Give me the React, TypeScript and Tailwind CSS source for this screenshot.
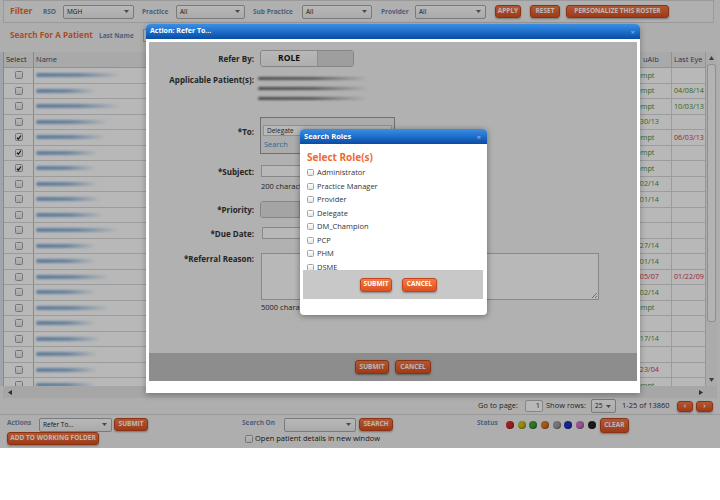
import React from "react";

type Row = {
  w: number;
  checked?: boolean;
  ualb?: string;
  ualbRed?: boolean;
  eye?: string;
  eyeRed?: boolean;
};

const rows: Row[] = [
  { w: 85, ualb: "Exempt" },
  { w: 60, ualb: "Exempt", eye: "04/08/14" },
  { w: 85, ualb: "Exempt", eye: "10/03/13" },
  { w: 73, ualb: "10/30/13" },
  { w: 70, checked: true, ualb: "Exempt", eye: "06/03/13", eyeRed: true },
  { w: 62, checked: true, ualb: "Exempt" },
  { w: 60, checked: true, ualb: "Exempt" },
  { w: 62, ualb: "01/02/14" },
  { w: 65, ualb: "02/01/14" },
  { w: 68 },
  { w: 83 },
  { w: 60, ualb: "02/27/14" },
  { w: 60, ualb: "03/01/14" },
  { w: 73, ualb: "03/05/07", ualbRed: true, eye: "01/22/09", eyeRed: true },
  { w: 60, ualb: "04/02/14" },
  { w: 73, ualb: "Exempt" },
  { w: 60 },
  { w: 65, ualb: "11/17/14" },
  { w: 62 },
  { w: 62, ualb: "11/23/04", ualbRed: true },
  { w: 60, ualb: "Exempt" },
];

const roles = ["Administrator", "Practice Manager", "Provider", "Delegate", "DM_Champion", "PCP", "PHM", "DSME"];

const statusColors = ["#d92b2b", "#c9c21f", "#3ea23a", "#e07b22", "#a3a3a3", "#2430c9", "#d274c9", "#262626"];

function Btn({ children, className = "" }: { children?: React.ReactNode; className?: string }) {
  return (
    <div
      className={`flex shrink-0 items-center justify-center rounded-[3px] border border-[#c2461c] bg-linear-to-b from-[#f57b46] to-[#dc5020] text-[6.5px] font-bold uppercase leading-none text-white shadow-[0_1px_2px_rgba(0,0,0,0.35)] ${className}`}
    >
      {children}
    </div>
  );
}

function Sel({ value, className = "" }: { value: string; className?: string }) {
  return (
    <div
      className={`flex h-[14px] shrink-0 items-center justify-between rounded-[2px] border border-[#a9a9a9] bg-linear-to-b from-white to-[#ececec] pl-[3px] pr-[4px] text-[6.5px] text-[#222] ${className}`}
    >
      <span>{value}</span>
      <svg width="5" height="3" viewBox="0 0 5 3">
        <path d="M0 0h5L2.5 3z" fill="#666" />
      </svg>
    </div>
  );
}

function Check({ checked, size = 8 }: { checked?: boolean; size?: number }) {
  return (
    <div
      className="flex shrink-0 items-center justify-center rounded-[1.5px] border border-[#a3a3a3] bg-linear-to-b from-white to-[#e6e6e6]"
      style={{ width: size, height: size }}
    >
      {checked && (
        <svg width="7" height="7" viewBox="0 0 7 7">
          <path d="M1.2 3.8 2.8 5.4 5.8 1.2" fill="none" stroke="#111" strokeWidth="1.3" />
        </svg>
      )}
    </div>
  );
}

function Label({ children, className = "" }: { children: React.ReactNode; className?: string }) {
  return <span className={`shrink-0 text-[6.5px] font-bold text-[#6a86ad] ${className}`}>{children}</span>;
}

function FormLabel({ children, className = "" }: { children: React.ReactNode; className?: string }) {
  return (
    <div className={`w-[105px] shrink-0 text-right text-[8px] font-bold leading-[11px] text-[#333] ${className}`}>
      {children}
    </div>
  );
}

function BlurLine({ width }: { width: number }) {
  return (
    <div
      className="h-[3px] rounded-full bg-linear-to-r from-[#6a6a6a] via-[#7a7a7a] to-transparent blur-[1px]"
      style={{ width }}
    />
  );
}

function FilterBar() {
  return (
    <div className="ml-[3px] flex h-[23px] w-[711px] items-center border border-[#d6d6d6] bg-[#f4f4f4] pl-[6px]">
      <span className="w-[33px] shrink-0 text-[8.5px] font-bold text-[#ec6a32]">Filter</span>
      <Label className="w-[20px]">RSO</Label>
      <Sel value="MGH" className="w-[71px]" />
      <Label className="ml-[8px] w-[34px]">Practice</Label>
      <Sel value="All" className="w-[69px]" />
      <Label className="ml-[8px] w-[49px]">Sub Practice</Label>
      <Sel value="All" className="w-[70px]" />
      <Label className="ml-[9px] w-[34px]">Provider</Label>
      <Sel value="All" className="w-[71px]" />
      <Btn className="ml-[9px] h-[13px] w-[26px]">Apply</Btn>
      <Btn className="ml-[9px] h-[13px] w-[30px]">Reset</Btn>
      <Btn className="ml-[6px] h-[13px] w-[103px]">Personalize this roster</Btn>
    </div>
  );
}

function Roster() {
  return (
    <>
      <div className="flex h-[334px]">
        <div className="w-[3px] bg-[#dde5ee]" />
        <div className="w-[702px] overflow-hidden border-l border-[#bdbdbd] bg-white text-[7.2px]">
          <div className="flex h-[16px] items-center border-b border-[#c9c9c9] bg-[#eaeaea] text-[7.5px]">
            <div className="flex h-full w-[30px] items-center border-r border-[#bdbdbd] pl-[2px] text-[#333]">Select</div>
            <div className="flex-1 pl-[2px] text-[#36507a]">Name</div>
            <div className="flex h-full w-[50px] items-center pl-[22px] text-[#36507a]">uAlb</div>
            <div className="flex h-full w-[34px] items-center border-l border-[#c9c9c9] pl-[2px] text-[#36507a]">Last Eye</div>
          </div>
          {rows.map((r, i) => (
            <div key={i} className="flex h-[15.5px] items-center border-b border-[#d9d9d9]">
              <div className="flex h-full w-[30px] items-center justify-center border-r border-[#bdbdbd]">
                <Check checked={r.checked} />
              </div>
              <div className="flex-1 pl-[2px]">
                <div
                  className="h-[4px] rounded-full bg-linear-to-r from-[#86aed6] via-[#93b8dc] to-transparent blur-[1.2px]"
                  style={{ width: r.w }}
                />
              </div>
              <div className={`w-[50px] pl-[8px] ${r.ualbRed ? "text-[#d8334a]" : "text-[#4f8f34]"}`}>{r.ualb}</div>
              <div
                className={`flex h-full w-[34px] items-center border-l border-[#d9d9d9] pl-[2px] ${r.eyeRed ? "text-[#d8334a]" : "text-[#4f8f34]"}`}
              >
                {r.eye}
              </div>
            </div>
          ))}
        </div>
        <div className="relative w-[12px] border-l border-[#d0d0d0] bg-[#ededed]">
          <svg className="absolute left-[3px] top-[4px]" width="5" height="4" viewBox="0 0 5 4">
            <path d="M0 4 2.5 0 5 4z" fill="#555" />
          </svg>
          <div className="absolute left-[1px] right-[1px] top-[12px] h-[258px] rounded-[3px] border border-[#c6c6c6] bg-[#f8f8f8]" />
          <svg className="absolute bottom-[4px] left-[3px]" width="5" height="4" viewBox="0 0 5 4">
            <path d="M0 0h5L2.5 4z" fill="#555" />
          </svg>
        </div>
      </div>
      <div className="relative ml-[3px] h-[12px] w-[714px] bg-[#e6e6e6]">
        <svg className="absolute left-[5px] top-[4px]" width="4" height="5" viewBox="0 0 4 5">
          <path d="M4 0v5L0 2.5z" fill="#444" />
        </svg>
        <svg className="absolute left-[696px] top-[4px]" width="4" height="5" viewBox="0 0 4 5">
          <path d="M0 0v5l4-2.5z" fill="#444" />
        </svg>
      </div>
    </>
  );
}

function Pager() {
  return (
    <div className="flex h-[17px] items-center justify-end border-b border-[#d4d4d4] pr-[7px] text-[7.5px] text-[#333]">
      <span className="w-[47px] shrink-0">Go to page:</span>
      <div className="flex h-[12px] w-[18px] items-center justify-end rounded-[2px] border border-[#bbb] bg-white pr-[2px]">1</div>
      <span className="w-[48px] shrink-0 pl-[3px]">Show rows:</span>
      <Sel value="25" className="h-[12px] w-[25px]" />
      <span className="w-[61px] shrink-0 pl-[6px]">1-25 of 13860</span>
      <Btn className="h-[11px] w-[16px] text-[#c84a1c]">‹</Btn>
      <Btn className="ml-[3px] h-[11px] w-[17px] text-[#c84a1c]">›</Btn>
    </div>
  );
}

function ActionsBar() {
  return (
    <div className="flex pt-[3px] text-[7.5px] text-[#222]">
      <div className="w-[242px] shrink-0 pl-[7px]">
        <div className="flex h-[13px] items-center">
          <Label className="w-[32px] self-start">Actions</Label>
          <Sel value="Refer To..." className="h-[13px] w-[73px]" />
          <Btn className="ml-[2px] h-[13px] w-[34px]">Submit</Btn>
        </div>
        <Btn className="mt-[1px] h-[13px] w-[92px]">Add to working folder</Btn>
      </div>
      <div className="w-[235px] shrink-0">
        <div className="flex h-[13px] items-center">
          <Label className="w-[42px] self-start">Search On</Label>
          <Sel value="" className="h-[13px] w-[72px]" />
          <Btn className="ml-[3px] h-[13px] w-[34px]">Search</Btn>
        </div>
        <div className="mt-[2px] flex items-center gap-[2px] pl-[3px]">
          <Check />
          <span>Open patient details in new window</span>
        </div>
      </div>
      <div className="flex h-[14px] items-center">
        <Label className="w-[29px] self-start">Status</Label>
        <div className="flex gap-[3.7px]">
          {statusColors.map((c) => (
            <div
              key={c}
              className="h-[8px] w-[8px] rounded-full shadow-[inset_-1px_-1px_2px_rgba(0,0,0,0.35)]"
              style={{ backgroundColor: c }}
            />
          ))}
        </div>
        <Btn className="ml-[4px] h-[15px] w-[29px]">Clear</Btn>
      </div>
    </div>
  );
}

function ReferModal() {
  return (
    <div className="absolute left-[146px] top-[24px] flex h-[369px] w-[494px] flex-col rounded-t-[4px] bg-white shadow-[0_2px_6px_rgba(0,0,0,0.3)]">
      <div className="flex h-[15px] shrink-0 items-center justify-between rounded-t-[4px] bg-linear-to-b from-[#3b8fe2] via-[#1d6fcb] to-[#0b4ba3] pl-[4px] pr-[5px]">
        <span className="text-[7px] font-bold text-white">Action: Refer To...</span>
        <span className="text-[8px] leading-none text-[#9db8d8]">×</span>
      </div>
      <div className="flex flex-1 px-[3px] pb-[12px] pt-[3px]">
        <div className="relative flex flex-1 flex-col bg-[#f5f5f5] text-[7.5px] text-[#333]">
          <div className="mt-[8px] flex items-center">
            <FormLabel>Refer By:</FormLabel>
            <div className="ml-[6px] flex h-[17px] w-[94px] overflow-hidden rounded-[3px] border border-[#b9b9b9]">
              <div className="flex w-[56px] items-center justify-center bg-linear-to-b from-white to-[#f2f2f2] text-[8.5px] font-bold text-[#111]">
                ROLE
              </div>
              <div className="flex-1 border-l border-[#c4c4c4] bg-[#dcdcdc]" />
            </div>
          </div>
          <div className="mt-[7px] flex h-[29px]">
            <FormLabel className="text-[8.2px]">Applicable Patient(s):</FormLabel>
            <div className="ml-[4px] flex flex-col gap-[7px] pt-[3px]">
              <BlurLine width={110} />
              <BlurLine width={110} />
              <BlurLine width={108} />
            </div>
          </div>
          <div className="mt-[14px] flex">
            <FormLabel className="mt-[9px]">*To:</FormLabel>
            <div className="ml-[6px] h-[37px] w-[135px] border border-[#9a9a9a] bg-[#efefef] px-[2px] pt-[7px]">
              <div className="flex h-[11px] items-center border border-[#c8c8c8] bg-white pl-[3px] text-[6.5px]">Delegate</div>
              <div className="mt-[3px] pl-[1px] text-[#3d8fd0]">Search</div>
            </div>
          </div>
          <div className="mt-[11px] flex items-center">
            <FormLabel>*Subject:</FormLabel>
            <div className="ml-[7px] h-[12px] w-[160px] border border-[#bdbdbd] bg-white" />
          </div>
          <div className="mt-[4px] pl-[112px] leading-[10px]">200 characters remaining</div>
          <div className="mt-[10px] flex items-center">
            <FormLabel>*Priority:</FormLabel>
            <div className="ml-[6px] flex h-[17px] w-[80px] overflow-hidden rounded-[3px] border border-[#b9b9b9]">
              <div className="w-[38px] bg-[#e4e4e4]" />
              <div className="flex-1 border-l border-[#c4c4c4] bg-[#e8e8e8]" />
            </div>
          </div>
          <div className="mt-[9px] flex items-center">
            <FormLabel>*Due Date:</FormLabel>
            <div className="ml-[8px] h-[12px] w-[120px] border border-[#bdbdbd] bg-white" />
          </div>
          <div className="mt-[14px] flex">
            <FormLabel className="text-[8.2px]">*Referral Reason:</FormLabel>
            <div className="relative ml-[7px] h-[47px] w-[338px] border border-[#bdbdbd] bg-white">
              <svg className="absolute bottom-[1px] right-[1px]" width="6" height="6" viewBox="0 0 6 6">
                <path d="M6 1 1 6M6 4 4 6" stroke="#888" strokeWidth="0.8" />
              </svg>
            </div>
          </div>
          <div className="mt-[2px] pl-[112px] leading-[10px]">5000 characters remaining</div>
          <div className="mt-auto flex h-[28px] items-center justify-center gap-[6px] bg-[#c4c4c4]">
            <Btn className="h-[14px] w-[34px]">Submit</Btn>
            <Btn className="h-[14px] w-[36px]">Cancel</Btn>
          </div>
          <div className="absolute inset-0 bg-black/[0.28]" />
        </div>
      </div>
    </div>
  );
}

function SearchRolesDialog() {
  return (
    <div className="absolute left-[300px] top-[129px] flex h-[186px] w-[187px] flex-col rounded-[4px] bg-white shadow-[0_1px_6px_rgba(0,0,0,0.4)]">
      <div className="flex h-[15px] shrink-0 items-center justify-between rounded-t-[4px] bg-linear-to-b from-[#3b8fe2] via-[#1d6fcb] to-[#0b4ba3] pl-[4px] pr-[6px]">
        <span className="text-[7.5px] font-bold text-white">Search Roles</span>
        <span className="text-[8px] leading-none text-[#a9c0dc]">×</span>
      </div>
      <div className="pl-[7px] pt-[7px] text-[10px] font-bold leading-[12px] text-[#ee6b32]">Select Role(s)</div>
      <div className="mt-[3px] h-[104px] overflow-hidden pl-[7px]">
        {roles.map((r) => (
          <div key={r} className="flex h-[13.5px] items-center gap-[3px] text-[7.5px] text-[#333]">
            <Check size={7} />
            <span>{r}</span>
          </div>
        ))}
      </div>
      <div className="ml-[3px] mr-[4px] flex h-[29px] items-center bg-[#c8c8c8] pl-[57px]">
        <Btn className="h-[14px] w-[32px]">Submit</Btn>
        <Btn className="ml-[10px] h-[14px] w-[35px]">Cancel</Btn>
      </div>
    </div>
  );
}

export default function App() {
  return (
    <div className="relative h-[448px] w-[720px] overflow-hidden bg-[#f2f2f2] font-['Open_Sans',sans-serif] text-[#333]">
      <FilterBar />
      <div className="mb-[4px] flex h-[25px] items-center pl-[10px]">
        <span className="w-[89px] shrink-0 text-[8.2px] font-bold text-[#ec6a32]">Search For A Patient</span>
        <Label className="w-[44px]">Last Name</Label>
        <div className="h-[13px] w-[100px] border border-[#bbb] bg-white" />
      </div>
      <Roster />
      <Pager />
      <ActionsBar />
      <div className="absolute inset-0 bg-black/[0.28]" />
      <ReferModal />
      <SearchRolesDialog />
    </div>
  );
}
